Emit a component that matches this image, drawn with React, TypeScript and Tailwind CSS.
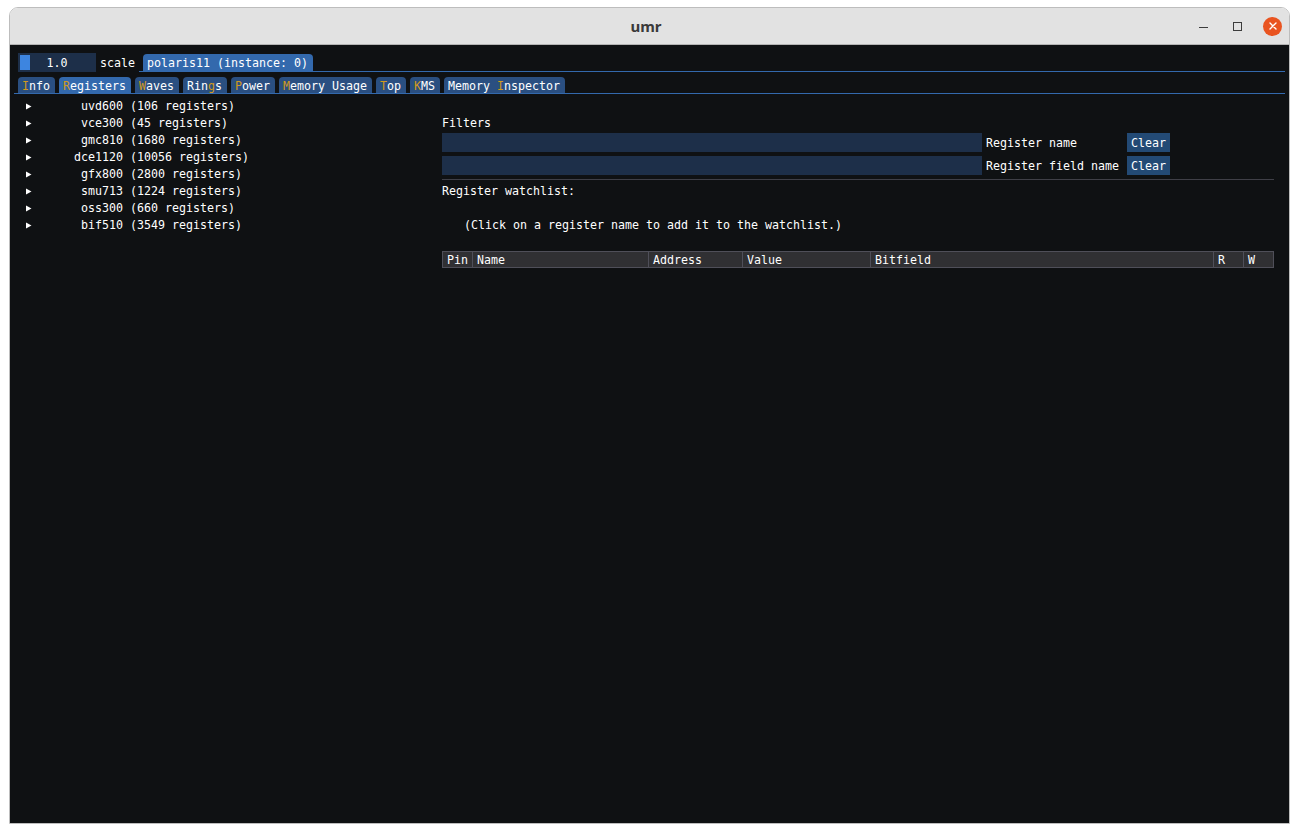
import React from "react";

const MONO = "font-['DejaVu_Sans_Mono','Liberation_Mono',monospace] text-[11.63px] leading-[13px]";

type TabDef = { label: string; hi: number };

const tabs: TabDef[] = [
  { label: "Info", hi: 0 },
  { label: "Registers", hi: 0 },
  { label: "Waves", hi: 0 },
  { label: "Rings", hi: 3 },
  { label: "Power", hi: 0 },
  { label: "Memory Usage", hi: 0 },
  { label: "Top", hi: 0 },
  { label: "KMS", hi: 0 },
  { label: "Memory Inspector", hi: 7 },
];

const blocks: [string, number][] = [
  ["uvd600", 106],
  ["vce300", 45],
  ["gmc810", 1680],
  ["dce1120", 10056],
  ["gfx800", 2800],
  ["smu713", 1224],
  ["oss300", 660],
  ["bif510", 3549],
];

function TabLabel({ t }: { t: TabDef }) {
  const a = t.label.slice(0, t.hi);
  const b = t.label.charAt(t.hi);
  const c = t.label.slice(t.hi + 1);
  return (
    <span className="whitespace-pre relative top-[1px]">
      {a}
      <span className="text-[#d09a1e]">{b}</span>
      {c}
    </span>
  );
}

function Arrow() {
  return (
    <svg width="6" height="7" viewBox="0 0 6 7" className="block">
      <polygon points="0,0.5 5.5,3.5 0,6.5" fill="#ffffff" />
    </svg>
  );
}

function T({ children }: { children: React.ReactNode }) {
  return <span className="relative top-[1px] whitespace-pre">{children}</span>;
}

export default function App() {
  return (
    <div className="w-[1300px] h-[834px] bg-white pt-[7px] pl-[9px] overflow-hidden">
      <div className="w-[1281px] h-[817px] flex flex-col rounded-t-[9px] border border-[#bdbdbd] overflow-hidden">
        {/* Title bar */}
        <div className="h-[37px] shrink-0 bg-[#e2e2e2] border-b border-[#b4b4b4] flex items-center">
          <div className="flex-1 basis-0" />
          <div className="font-['Noto_Sans',sans-serif] font-bold text-[15px] text-[#3a3a3a] leading-none">
            umr
          </div>
          <div className="flex-1 basis-0 flex items-center justify-end pr-[7px]">
            <div className="w-[9px] h-[1.5px] bg-[#3c3c3c] mt-[3px]" />
            <div className="w-[9px] h-[9px] border border-[#3c3c3c] ml-[25px]" />
            <div className="w-[19px] h-[19px] rounded-full bg-[#e95420] ml-[21px] flex items-center justify-center">
              <svg width="8" height="8" viewBox="0 0 8 8">
                <path d="M1 1 L7 7 M7 1 L1 7" stroke="#ffffff" strokeWidth="1.4" strokeLinecap="round" />
              </svg>
            </div>
          </div>
        </div>

        {/* Content */}
        <div className={`flex-1 bg-[#0f1113] pl-[8px] pr-[4px] pt-[8px] text-white ${MONO}`}>
          {/* Row 1 */}
          <div className="flex items-end h-[19px]">
            <div className="relative w-[78px] h-[19px] bg-[#1d2f49] flex items-center justify-center shrink-0">
              <div className="absolute left-[2px] top-[2px] w-[10px] h-[15px] bg-[#3d85e0]" />
              <T>1.0</T>
            </div>
            <div className="ml-[4px] h-[19px] flex items-center">
              <T>scale</T>
            </div>
            <div className="ml-[4px] flex-1 flex flex-col">
              <div className="flex pl-[4px]">
                <div className="h-[17px] pl-[4px] pr-[5px] bg-[#3369ad] rounded-t-[4px] flex items-center">
                  <T>polaris11 (instance: 0)</T>
                </div>
              </div>
              <div className="h-[1px] bg-[#3369ad]" />
            </div>
          </div>

          {/* Row 2 tabs */}
          <div className="mt-[5px] ml-[-4px] flex flex-col">
            <div className="flex pl-[4px] gap-[4px]">
              {tabs.map((t, i) => (
                <div
                  key={t.label}
                  className={`h-[16px] pl-[4px] pr-[5px] rounded-t-[4px] flex items-center ${
                    i === 1 ? "bg-[#3369ad]" : "bg-[#2a4f81]"
                  }`}
                >
                  <TabLabel t={t} />
                </div>
              ))}
            </div>
            <div className="h-[1px] bg-[#3369ad]" />
          </div>

          {/* Body */}
          <div className="mt-[5px] flex">
            {/* Left tree */}
            <div className="w-[424px] shrink-0 flex flex-col gap-[4px]">
              {blocks.map(([name, n]) => (
                <div key={name} className="h-[13px] flex items-center">
                  <div className="ml-[8px] w-[6px] relative top-[0.5px]">
                    <Arrow />
                  </div>
                  <span className="ml-[42px] whitespace-pre relative top-[1px]">
                    {name.padStart(7, " ")} ({n} registers)
                  </span>
                </div>
              ))}
            </div>

            {/* Right pane */}
            <div className="w-[832px] shrink-0 flex flex-col">
              <div className="h-[13px]" />
              <div className="mt-[4px] h-[13px]">
                <T>Filters</T>
              </div>
              <div className="mt-[4px] flex h-[19px]">
                <div className="w-[540px] bg-[#1d2f49]" />
                <div className="ml-[4px] w-[141px] flex items-center">
                  <T>Register name</T>
                </div>
                <div className="w-[43px] bg-[#234a75] flex items-center pl-[4px]">
                  <T>Clear</T>
                </div>
              </div>
              <div className="mt-[4px] flex h-[19px]">
                <div className="w-[540px] bg-[#1d2f49]" />
                <div className="ml-[4px] w-[141px] flex items-center">
                  <T>Register field name</T>
                </div>
                <div className="w-[43px] bg-[#234a75] flex items-center pl-[4px]">
                  <T>Clear</T>
                </div>
              </div>
              <div className="mt-[4px] h-[1px] bg-[#3f3f47]" />
              <div className="mt-[4px] h-[13px]">
                <T>Register watchlist:</T>
              </div>
              <div className="mt-[21px] h-[13px] pl-[22px]">
                <T>(Click on a register name to add it to the watchlist.)</T>
              </div>
              <div className="mt-[20px] flex h-[17px] bg-[#303033] border-y border-r border-[#4f4f59]">
                {[
                  ["Pin", 30],
                  ["Name", 176],
                  ["Address", 94],
                  ["Value", 128],
                  ["Bitfield", 343],
                  ["R", 30],
                  ["W", 30],
                ].map(([label, w]) => (
                  <div
                    key={label as string}
                    className="border-l border-[#4f4f59] pl-[4px] flex items-center"
                    style={{ width: w as number }}
                  >
                    <T>{label}</T>
                  </div>
                ))}
              </div>
            </div>
          </div>
        </div>
      </div>
    </div>
  );
}
